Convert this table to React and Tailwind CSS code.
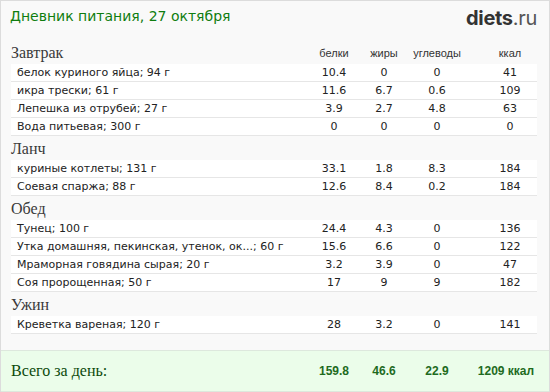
const meals = [
  {
    title: "Завтрак",
    items: [
      ["белок куриного яйца; 94 г", "10.4", "0", "0", "41"],
      ["икра трески; 61 г", "11.6", "6.7", "0.6", "109"],
      ["Лепешка из отрубей; 27 г", "3.9", "2.7", "4.8", "63"],
      ["Вода питьевая; 300 г", "0", "0", "0", "0"],
    ],
  },
  {
    title: "Ланч",
    items: [
      ["куриные котлеты; 131 г", "33.1", "1.8", "8.3", "184"],
      ["Соевая спаржа; 88 г", "12.6", "8.4", "0.2", "184"],
    ],
  },
  {
    title: "Обед",
    items: [
      ["Тунец; 100 г", "24.4", "4.3", "0", "136"],
      ["Утка домашняя, пекинская, утенок, ок...; 60 г", "15.6", "6.6", "0", "122"],
      ["Мраморная говядина сырая; 20 г", "3.2", "3.9", "0", "47"],
      ["Соя пророщенная; 50 г", "17", "9", "9", "182"],
    ],
  },
  {
    title: "Ужин",
    items: [["Креветка вареная; 120 г", "28", "3.2", "0", "141"]],
  },
];

function Cols({ v, className = "" }) {
  return (
    <>
      <div className={"w-[50px] text-center " + className}>{v[0]}</div>
      <div className={"w-[50px] text-center " + className}>{v[1]}</div>
      <div className={"w-[56px] text-center " + className}>{v[2]}</div>
      <div className="w-[18px]" />
      <div className={"w-[54px] text-center " + className}>{v[3]}</div>
    </>
  );
}

function Row({ item }) {
  return (
    <div className="flex h-[18px] items-center border-b border-[#e6e6e6] bg-white text-[11px] leading-[17px] text-[#222] font-['DejaVu_Sans',sans-serif]">
      <div className="flex-1 pl-[6px] whitespace-nowrap">{item[0]}</div>
      <Cols v={item.slice(1)} />
    </div>
  );
}

function Meal({ meal, first }) {
  return (
    <div>
      <div className="flex h-[24px] items-end pb-[1px]">
        <div className="flex-1 text-[16px] leading-[20px] text-[#3a3a3a] font-['Liberation_Serif',serif]">
          {meal.title}
        </div>
        {first && (
          <div className="flex text-[11px] leading-[20px] text-[#333] font-['Liberation_Sans',sans-serif]">
            <Cols v={["белки", "жиры", "углеводы", "ккал"]} />
          </div>
        )}
      </div>
      {meal.items.map((it, i) => (
        <Row key={i} item={it} />
      ))}
    </div>
  );
}

export default function App() {
  return (
    <div className="w-[550px] h-[392px] overflow-hidden border border-b-0 border-[#dcdcdc] bg-[#f9f9f9] flex flex-col">
      <div className="flex h-[39px] items-start justify-between pl-[9px] pr-[12px] pt-[5px]">
        <div className="text-[14px] leading-[20px] text-[#0f7d0f] font-['DejaVu_Sans',sans-serif]">
          Дневник питания, 27 октября
        </div>
        <div className="text-[20px] leading-[24px] text-[#333] font-['Inter',sans-serif] tracking-[-0.3px]">
          <span className="font-bold">diets</span>
          <span className="text-[#555]">.ru</span>
        </div>
      </div>
      <div className="pl-[10px] pr-[12px]">
        {meals.map((m, i) => (
          <Meal key={i} meal={m} first={i === 0} />
        ))}
      </div>
      <div className="mt-auto flex h-[42px] items-center border-t border-b border-[#dde8dd] bg-[#ebfdea] pl-[10px] pr-[12px]">
        <div className="flex-1 text-[16px] text-[#0b4a0b] font-['Liberation_Serif',serif]">
          Всего за день:
        </div>
        <div className="flex text-[12px] font-bold text-[#1e6b1e] font-['Liberation_Sans',sans-serif]">
          <div className="w-[50px] text-center">159.8</div>
          <div className="w-[50px] text-center">46.6</div>
          <div className="w-[56px] text-center">22.9</div>
          <div className="w-[10px]" />
          <div className="w-[62px] text-center whitespace-nowrap">1209 ккал</div>
        </div>
      </div>
    </div>
  );
}
